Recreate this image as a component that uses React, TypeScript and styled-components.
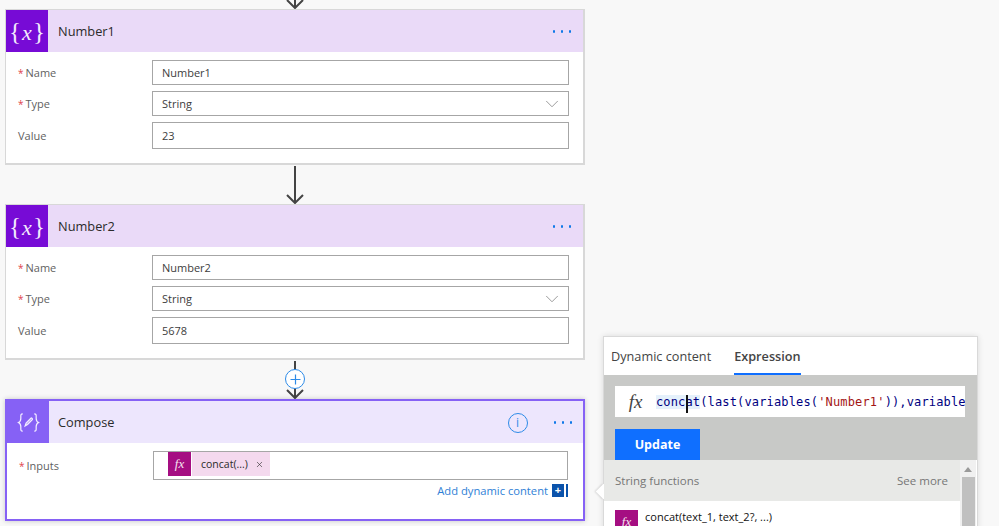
import React from 'react';
import styled, { createGlobalStyle } from 'styled-components';
import { ChevronDown, X } from 'lucide-react';

const GlobalStyle = createGlobalStyle`
  html, body { margin: 0; padding: 0; background: #f8f8f8; }
  body { font-family: 'Open Sans', 'Noto Sans', sans-serif; color: #333; }
`;

const Page = styled.div`
  width: 999px; height: 526px; overflow: hidden; display: flex; align-items: flex-start; padding-left: 5px; box-sizing: border-box;
`;

const Flow = styled.div`
  width: 580px; flex: none; display: flex; flex-direction: column;
`;

const Connector = styled.div<{ $height: number }>`
  height: ${(p) => p.$height}px; display: flex; justify-content: center; align-items: flex-end; overflow: hidden; flex: none;
`;

const Card = styled.div`
  width: 580px; height: 156px; box-sizing: border-box; background: #fff; border: 1px solid #d8d8d8; border-bottom-width: 2px; border-right-width: 2px; flex: none;
`;

const ComposeCard = styled.div`
  width: 580px; height: 122px; box-sizing: border-box; background: #fff; border: 2px solid #8661f5; box-shadow: 0 0 5px rgba(0,0,0,0.2); flex: none; position: relative;
`;

const CardHeader = styled.div<{ $bg: string; $height: number }>`
  height: ${(p) => p.$height}px; background: ${(p) => p.$bg}; display: flex; align-items: center;
`;

const IconTile = styled.div<{ $bg: string; $width: number }>`
  width: ${(p) => p.$width}px; height: 100%; background: ${(p) => p.$bg}; color: #f3eafc; display: flex; align-items: center; justify-content: center; flex: none;
`;

const VarGlyph = styled.span`
  font-family: 'Liberation Serif', serif; font-size: 25px; line-height: 1; white-space: nowrap;
  i { font-size: 22px; margin: 0 1px; }
`;

const CardTitle = styled.div<{ $left: number }>`
  margin-left: ${(p) => p.$left}px; font-size: 12.8px; color: #2b2b2b; flex: 1;
`;

const Dots = styled.div<{ $right: number }>`
  display: flex; gap: 5.5px; margin: 1px ${(p) => p.$right}px 0 0;
`;

const Dot = styled.span`
  width: 2.5px; height: 2.5px; border-radius: 50%; background: #0f78e8;
`;

const InfoButton = styled.div`
  width: 20px; height: 20px; box-sizing: border-box; border: 1px solid #2d8be8; border-radius: 50%; color: #2d8be8; font-size: 12px; line-height: 18px; text-align: center; margin: 1px 26px 0 0;
`;

const Fields = styled.div`
  padding: 8px 14px 0 12px; display: flex; flex-direction: column; gap: 6px;
`;

const Row = styled.div`
  display: flex; align-items: center;
`;

const Label = styled.div<{ $width?: number }>`
  width: ${(p) => p.$width ?? 134}px; flex: none; font-size: 11px; color: #5f5f5f;
  b { color: #e0424b; font-weight: 400; margin-right: 2px; font-size: 10px; }
`;

const Input = styled.div<{ $height: number }>`
  flex: 1; height: ${(p) => p.$height}px; box-sizing: border-box; border: 1px solid #a6a6a6; border-bottom-width: 1.5px; background: #fff; padding-left: 9px; display: flex; align-items: center; justify-content: space-between; font-size: 11px; color: #3d3d3d;
  svg { margin-right: 5px; color: #777; }
`;

const ComposeFields = styled.div`
  padding: 8px 15px 0 12px;
`;

const TokenInput = styled.div`
  flex: 1; height: 29px; box-sizing: border-box; border: 1px solid #a6a6a6; background: #fff; padding: 0 0 3px 14px; display: flex; align-items: center;
`;

const TokenIcon = styled.div`
  width: 23px; height: 24px; flex: none; background: #a50e82; color: #f5e3f0; font-family: 'Liberation Serif', serif; font-style: italic; font-size: 13px; display: flex; align-items: center; justify-content: center;
`;

const TokenChip = styled.div`
  height: 24px; width: 78px; box-sizing: border-box; background: #f4d9ee; margin-left: 1px; padding-left: 9px; display: flex; align-items: center; gap: 7px; font-size: 10.5px; color: #2b2b2b;
`;

const AddRow = styled.div`
  display: flex; justify-content: flex-end; align-items: center; gap: 4px; margin-top: 3px; font-size: 11.2px; color: #2f7fd6;
`;

const AddIcon = styled.div`
  width: 16px; height: 13px; box-sizing: border-box; flex: none; border-right: 2px solid #0b53ab; display: flex;
`;

const AddSquare = styled.span`
  width: 12px; height: 13px; background: #0b53ab; color: #fff; font-size: 11px; font-weight: 700; line-height: 12px; text-align: center;
`;

const Panel = styled.div`
  width: 375px; height: 260px; margin: 336px 0 0 18px; flex: none; box-sizing: border-box; background: #fff; border: 1px solid #d9d9d9; box-shadow: 0 0 6px rgba(0,0,0,0.12); position: relative;
  &::before { content: ''; position: absolute; left: -6px; top: 149px; width: 11px; height: 11px; background: #fff; transform: rotate(45deg); box-shadow: -1px 1px 2px rgba(0,0,0,0.12); }
`;

const Tabs = styled.div`
  height: 38px; display: flex; padding-left: 7px; gap: 23px; position: relative; background: #fff;
`;

const Tab = styled.div<{ $active?: boolean }>`
  height: 38px; box-sizing: border-box; padding-top: 10px; font-size: 12.7px; color: #444; font-weight: ${(p) => (p.$active ? 600 : 400)}; border-bottom: 2px solid ${(p) => (p.$active ? '#0f6fff' : 'transparent')};
`;

const ExpressionArea = styled.div`
  height: 85px; box-sizing: border-box; background: #c8c9c7; padding: 11px 12px 0 11px; display: flex; flex-direction: column; gap: 12px; position: relative;
`;

const ExpressionBox = styled.div`
  height: 31px; flex: none; background: #fff; display: flex; align-items: center; overflow: hidden;
`;

const FxMark = styled.div`
  width: 41px; flex: none; text-align: center; font-family: 'Liberation Serif', serif; font-style: italic; font-size: 19px; color: #444;
`;

const Code = styled.code`
  font-family: 'DejaVu Sans Mono', 'Liberation Mono', monospace; font-size: 12px; color: #00007f; white-space: nowrap; line-height: 16px; letter-spacing: 0.15px;
`;

const Match = styled.span`
  background: #e5f1fb; position: relative;
`;

const Caret = styled.span`
  position: absolute; left: 30px; top: 0; width: 1.5px; height: 18px; background: #111;
`;

const Str = styled.span`
  color: #a31515;
`;

const UpdateButton = styled.div`
  width: 85px; height: 31px; flex: none; background: #0f6fff; color: #fff; font-size: 12.5px; font-weight: 700; display: flex; align-items: center; justify-content: center;
`;

const ListArea = styled.div`
  display: flex; background: #fff; position: relative;
`;

const ListMain = styled.div`
  flex: 1;
`;

const SectionHead = styled.div`
  height: 41px; background: #e8e9e7; padding: 0 12px 0 11px; display: flex; align-items: center; justify-content: space-between; font-size: 11.5px; color: #767676;
`;

const FunctionRow = styled.div`
  display: flex; padding: 9px 0 0 11px; gap: 7px; font-size: 11px; color: #111; background: #fff;
`;

const FunctionName = styled.div`
  margin-top: -1px;
`;

const ScrollTrack = styled.div`
  width: 16px; height: 200px; background: #f0f0f0; flex: none; display: flex; flex-direction: column; align-items: center; margin-right: 1px;
`;

const ScrollUp = styled.div`
  width: 0; height: 0; margin: 7px 0 5px; border-left: 4px solid transparent; border-right: 4px solid transparent; border-bottom: 5px solid #9a9a9a;
`;

const ScrollThumb = styled.div`
  width: 13px; height: 150px; background: #c0c0c0;
`;

const PlusBadge = styled.div`
  position: absolute; left: 278px; top: -32px; width: 20px; height: 20px; box-sizing: border-box; border: 1px solid #2d8be8; border-radius: 50%; background: #fff; color: #2d8be8; z-index: 2; display: flex; align-items: center; justify-content: center;
`;

const Arrow = ({ height }: { height: number }) => (
  <svg width="20" height={height} viewBox={`0 0 20 ${height}`} fill="none" stroke="#444" strokeWidth="2">
    <path d={`M10 0V${height - 1}`} />
    <path d={`M2 ${height - 9}L10 ${height - 1}L18 ${height - 9}`} />
  </svg>
);

const VariableIcon = () => (
  <IconTile $bg="#770bd6" $width={42}>
    <VarGlyph>
      {'{'}
      <i>x</i>
      {'}'}
    </VarGlyph>
  </IconTile>
);

const ComposeIcon = () => (
  <IconTile $bg="#8661f5" $width={42}>
    <svg width="23" height="23" viewBox="0 0 24 24" fill="none" stroke="#f1ecff" strokeWidth="1.3">
      <path d="M6 3C3.5 3 4 5 4 7.5C4 10 3.8 11 1.5 12C3.8 13 4 14 4 16.500C4 19 3.5 21 6 21" />
      <path d="M18 3C20.500 3 20 5 20 7.500C20 10 20.200 11 22.500 12C20.200 13 20 14 20 16.500C20 19 20.500 21 18 21" />
      <path d="M8.500 15.500L9.500 12.500L14.500 7.500C15.300 6.900 16.600 8.200 16 9L11 14L8.500 15.500Z" fill="#f1ecff" fillOpacity="0.35" />
    </svg>
  </IconTile>
);

const VariableCard = ({ name, value }: { name: string; value: string }) => (
  <Card>
    <CardHeader $bg="#eadaf8" $height={42}>
      <VariableIcon />
      <CardTitle $left={10}>{name}</CardTitle>
      <Dots $right={12}>
        <Dot />
        <Dot />
        <Dot />
      </Dots>
    </CardHeader>
    <Fields>
      <Row>
        <Label>
          <b>*</b>Name
        </Label>
        <Input $height={25}>{name}</Input>
      </Row>
      <Row>
        <Label>
          <b>*</b>Type
        </Label>
        <Input $height={25}>
          String
          <ChevronDown size={22} strokeWidth={0.8} />
        </Input>
      </Row>
      <Row>
        <Label>Value</Label>
        <Input $height={27}>{value}</Input>
      </Row>
    </Fields>
  </Card>
);

const App = () => (
  <Page>
    <GlobalStyle />
    <Flow>
      <Connector $height={9}>
        <Arrow height={9} />
      </Connector>
      <VariableCard name="Number1" value="23" />
      <Connector $height={39}>
        <Arrow height={38} />
      </Connector>
      <VariableCard name="Number2" value="5678" />
      <Connector $height={39}>
        <Arrow height={38} />
      </Connector>
      <ComposeCard>
        <PlusBadge>
          <svg width="11" height="11" viewBox="0 0 11 11" stroke="currentColor" strokeWidth="1.2">
            <path d="M5.500 0.500V10.500M0.500 5.500H10.500" />
          </svg>
        </PlusBadge>
        <CardHeader $bg="#ede6fd" $height={42}>
          <ComposeIcon />
          <CardTitle $left={9}>Compose</CardTitle>
          <InfoButton>i</InfoButton>
          <Dots $right={11}>
            <Dot />
            <Dot />
            <Dot />
          </Dots>
        </CardHeader>
        <ComposeFields>
          <Row>
            <Label $width={134}>
              <b>*</b>Inputs
            </Label>
            <TokenInput>
              <TokenIcon>fx</TokenIcon>
              <TokenChip>
                concat(...)
                <X size={9} strokeWidth={1.6} />
              </TokenChip>
            </TokenInput>
          </Row>
          <AddRow>
            Add dynamic content
            <AddIcon>
              <AddSquare>+</AddSquare>
            </AddIcon>
          </AddRow>
        </ComposeFields>
      </ComposeCard>
    </Flow>
    <Panel>
      <Tabs>
        <Tab>Dynamic content</Tab>
        <Tab $active>Expression</Tab>
      </Tabs>
      <ExpressionArea>
        <ExpressionBox>
          <FxMark>fx</FxMark>
          <Code>
            <Match>
              concat
              <Caret />
            </Match>
            (last(variables(<Str>'Number1'</Str>)),variables(<Str>'Number2'</Str>))
          </Code>
        </ExpressionBox>
        <UpdateButton>Update</UpdateButton>
      </ExpressionArea>
      <ListArea>
        <ListMain>
          <SectionHead>
            <span>String functions</span>
            <span>See more</span>
          </SectionHead>
          <FunctionRow>
            <TokenIcon>fx</TokenIcon>
            <FunctionName>concat(text_1, text_2?, ...)</FunctionName>
          </FunctionRow>
        </ListMain>
        <ScrollTrack>
          <ScrollUp />
          <ScrollThumb />
        </ScrollTrack>
      </ListArea>
    </Panel>
  </Page>
);

export default App;
